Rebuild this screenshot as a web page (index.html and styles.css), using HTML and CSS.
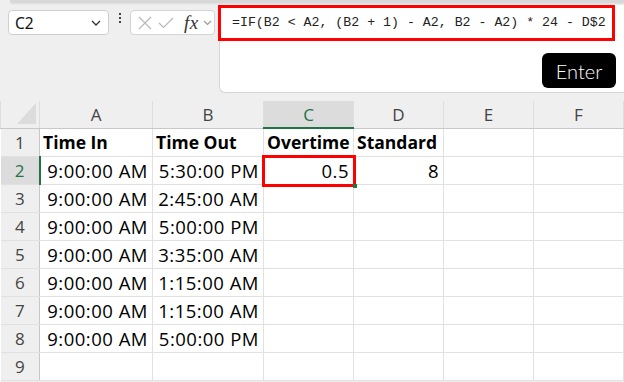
FILE: index.html
```html
<!DOCTYPE html>
<html lang="en">

<head>
  <meta charset="UTF-8">
  <meta name="viewport" content="width=device-width, initial-scale=1.0">
  <title>Overtime sheet</title>
  <link rel="stylesheet" href="styles.css">
</head>

<body>
  <!-- ribbon edge -->
  <div class="ribbon-edge"></div>

  <!-- name box + formula bar -->
  <div class="toolbar">
    <div class="name-box">
      <span>C2</span>
      <svg width="10" height="6" viewBox="0 0 10 6"><path d="M1 1 L5 5 L9 1" fill="none" stroke="#333" stroke-width="1.3"/></svg>
    </div>
    <div class="dots"><i></i><i></i><i></i></div>
    <div class="fx-box">
      <svg width="14" height="14" viewBox="0 0 14 14"><path d="M1 1 L13 13 M13 1 L1 13" stroke="#b8b8b8" stroke-width="1.2"/></svg>
      <svg width="16" height="12" viewBox="0 0 16 12"><path d="M1 6 L5.5 10.5 L15 1" fill="none" stroke="#b8b8b8" stroke-width="1.2"/></svg>
      <span class="fx">fx</span>
      <svg width="9" height="6" viewBox="0 0 9 6"><path d="M1 1 L4.5 4.5 L8 1" fill="none" stroke="#999" stroke-width="1.1"/></svg>
    </div>
    <div class="formula-panel">
      <div class="formula">=IF(B2 &lt; A2, (B2 + 1) - A2, B2 - A2) * 24 - D$2</div>
      <button class="enter">Enter</button>
    </div>
  </div>

  <!-- worksheet -->
  <table class="sheet">
    <colgroup>
      <col class="col-head">
      <col class="col-a">
      <col class="col-b">
      <col class="col-c">
      <col class="col-c">
      <col class="col-c">
      <col class="col-c">
    </colgroup>
    <thead>
      <tr>
        <th class="corner">
          <svg width="20" height="22" viewBox="0 0 20 22"><path d="M0 21 L19 21 L19 0 Z" fill="#dcdcdc"/></svg>
        </th>
        <th>A</th>
        <th>B</th>
        <th class="active-col">C</th>
        <th>D</th>
        <th>E</th>
        <th>F</th>
      </tr>
    </thead>
    <tbody>
      <tr>
        <th class="row-num">1</th>
        <td class="label">Time In</td>
        <td class="label">Time Out</td>
        <td class="label">Overtime</td>
        <td class="label">Standard</td>
        <td></td>
        <td></td>
      </tr>
      <tr>
        <th class="row-num active-row">2</th>
        <td class="num">9:00:00 AM</td>
        <td class="num">5:30:00 PM</td>
        <td class="num selected">0.5</td>
        <td class="num">8</td>
        <td></td>
        <td></td>
      </tr>
      <tr>
        <th class="row-num">3</th>
        <td class="num">9:00:00 AM</td>
        <td class="num">2:45:00 AM</td>
        <td></td><td></td><td></td><td></td>
      </tr>
      <tr>
        <th class="row-num">4</th>
        <td class="num">9:00:00 AM</td>
        <td class="num">5:00:00 PM</td>
        <td></td><td></td><td></td><td></td>
      </tr>
      <tr>
        <th class="row-num">5</th>
        <td class="num">9:00:00 AM</td>
        <td class="num">3:35:00 AM</td>
        <td></td><td></td><td></td><td></td>
      </tr>
      <tr>
        <th class="row-num">6</th>
        <td class="num">9:00:00 AM</td>
        <td class="num">1:15:00 AM</td>
        <td></td><td></td><td></td><td></td>
      </tr>
      <tr>
        <th class="row-num">7</th>
        <td class="num">9:00:00 AM</td>
        <td class="num">1:15:00 AM</td>
        <td></td><td></td><td></td><td></td>
      </tr>
      <tr>
        <th class="row-num">8</th>
        <td class="num">9:00:00 AM</td>
        <td class="num">5:00:00 PM</td>
        <td></td><td></td><td></td><td></td>
      </tr>
      <tr>
        <th class="row-num">9</th>
        <td></td><td></td><td></td><td></td><td></td><td></td>
      </tr>
    </tbody>
  </table>
</body>

</html>
```

FILE: styles.css
```css
/* page */
body {
  margin: 0;
  background-color: #efefef;
  font-family: "Open Sans", sans-serif;
  overflow: hidden;
}

/* ribbon edge */
.ribbon-edge {
  height: 3px;
  margin-left: 10px;
  background-color: #d8d8d8;
  border-bottom-left-radius: 4px;
  box-shadow: 0 1px 2px rgba(0, 0, 0, 0.08);
}

/* toolbar */
.toolbar {
  display: flex;
  align-items: flex-start;
  height: 98px;
  padding: 2px 0 0 8px;
  box-sizing: border-box;
}

.name-box {
  width: 101px;
  height: 25px;
  margin-top: 5px;
  box-sizing: border-box;
  display: flex;
  align-items: center;
  justify-content: space-between;
  padding: 0 7px 0 6px;
  background-color: white;
  border: 1px solid #cfcfcf;
  border-radius: 4px;
  font-family: "Noto Sans", sans-serif;
  font-size: 15.5px;
  color: #111;
}

.dots {
  width: 21px;
  margin-top: 8px;
  display: flex;
  flex-direction: column;
  align-items: center;
  gap: 2px;
}

.dots i {
  width: 2px;
  height: 2px;
  background-color: #444;
}

.fx-box {
  width: 85px;
  height: 25px;
  margin-top: 5px;
  box-sizing: border-box;
  display: flex;
  align-items: center;
  gap: 6px;
  padding-left: 7px;
  background-color: white;
  border: 1px solid #d4d4d4;
  border-radius: 4px;
}

.fx {
  font-family: "Liberation Serif", serif;
  font-style: italic;
  font-size: 19px;
  color: #333;
  margin-left: 4px;
  margin-right: -2px;
  letter-spacing: 0.5px;
}

.formula-panel {
  flex: 1;
  height: 88px;
  margin-left: 4px;
  box-sizing: border-box;
  display: flex;
  flex-direction: column;
  background-color: white;
  border-left: 1px solid #d6d6d6;
  border-bottom: 1px solid #d6d6d6;
  border-bottom-left-radius: 6px;
}

.formula {
  height: 36px;
  margin: 0 9px 0 -2px;
  box-sizing: border-box;
  border: 3px solid #ff0000;
  padding-left: 11px;
  line-height: 30px;
  font-family: "Liberation Mono", monospace;
  font-size: 13.25px;
  color: #222;
  white-space: nowrap;
}

.enter {
  align-self: flex-end;
  width: 74px;
  height: 35px;
  margin: 12px 8px 0 0;
  background-color: black;
  color: white;
  border: none;
  border-radius: 6px;
  font-family: Lato, sans-serif;
  font-weight: 300;
  font-size: 20px;
  padding: 0;
}

/* worksheet */
.sheet {
  border-collapse: collapse;
  table-layout: fixed;
  width: 624px;
  background-color: white;
}

.col-head { width: 39px; }
.col-a { width: 113px; }
.col-b { width: 111px; }
.col-c { width: 90px; }

.sheet thead tr {
  height: 27px;
}

.sheet tbody tr {
  height: 28px;
}

.sheet th,
.sheet td {
  padding: 0 4px;
  border: 1px solid #e1e1e1;
  font-size: 18.5px;
  letter-spacing: 0.5px;
  color: #000;
  white-space: nowrap;
  overflow: hidden;
}

.sheet thead th {
  background-color: #efefef;
  font-weight: normal;
  font-size: 17px;
  letter-spacing: 0;
  color: #444;
  border-color: #dedede;
  border-bottom-color: #c8c8c8;
  border-top: none;
}

.sheet thead th.corner {
  position: relative;
  padding: 0;
}

.corner svg {
  position: absolute;
  right: 2px;
  bottom: 3px;
}

.sheet thead th.active-col {
  background-color: #dcdcdc;
  color: #217346;
  border-bottom: 2px solid #217346;
}

.sheet th.row-num {
  background-color: #efefef;
  font-weight: normal;
  font-size: 17px;
  letter-spacing: 0;
  color: #444;
  border-right-color: #c8c8c8;
  border-left: none;
}

.sheet th.row-num.active-row {
  background-color: #dcdcdc;
  color: #217346;
  border-right: 2px solid #217346;
}

.sheet td.label {
  font-weight: bold;
  font-size: 17.5px;
  letter-spacing: 0;
  text-align: left;
  padding-left: 3px;
}

.num {
  text-align: right;
  padding-right: 4px;
}

/* selected cell */
.sheet td.selected {
  position: relative;
  overflow: visible;
}

.selected::after {
  content: "";
  position: absolute;
  left: -2px;
  top: -2px;
  right: -3px;
  bottom: -3px;
  border: 3px solid #ff0000;
}

.selected::before {
  content: "";
  position: absolute;
  right: -4px;
  bottom: -4px;
  width: 4px;
  height: 4px;
  background-color: #217346;
  z-index: 1;
}
```
